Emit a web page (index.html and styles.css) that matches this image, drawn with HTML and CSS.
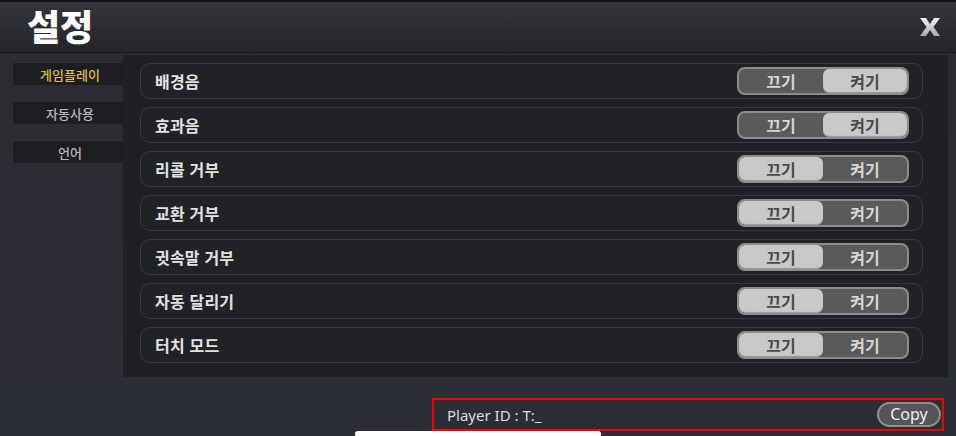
FILE: index.html
```html
<!DOCTYPE html>
<html lang="ko">
<head>
<meta charset="utf-8">
<link rel="stylesheet" href="styles.css">
</head>
<body>
<div class="screen">
  <header class="header">
    <h1 class="title">설정</h1>
    <svg class="close" width="22" height="20" viewBox="0 0 22 20">
      <defs>
        <linearGradient id="xg" x1="0" y1="0" x2="0" y2="1">
          <stop offset="0" stop-color="#f2f2f2"/>
          <stop offset="1" stop-color="#a9a9a9"/>
        </linearGradient>
      </defs>
      <path d="M1 1 L7 1 L11 7 L15 1 L21 1 L14.5 10 L21 19 L15 19 L11 13 L7 19 L1 19 L7.5 10 Z" fill="url(#xg)"/>
    </svg>
  </header>
  <div class="main">
    <nav class="sidebar">
      <div class="tab active">게임플레이</div>
      <div class="tab">자동사용</div>
      <div class="tab">언어</div>
    </nav>
    <section class="panel">
      <div class="row"><span class="label">배경음</span>
        <div class="toggle"><span class="half">끄기</span><span class="half on">켜기</span></div></div>
      <div class="row"><span class="label">효과음</span>
        <div class="toggle"><span class="half">끄기</span><span class="half on">켜기</span></div></div>
      <div class="row"><span class="label">리콜 거부</span>
        <div class="toggle"><span class="half on">끄기</span><span class="half">켜기</span></div></div>
      <div class="row"><span class="label">교환 거부</span>
        <div class="toggle"><span class="half on">끄기</span><span class="half">켜기</span></div></div>
      <div class="row"><span class="label">귓속말 거부</span>
        <div class="toggle"><span class="half on">끄기</span><span class="half">켜기</span></div></div>
      <div class="row"><span class="label">자동 달리기</span>
        <div class="toggle"><span class="half on">끄기</span><span class="half">켜기</span></div></div>
      <div class="row"><span class="label">터치 모드</span>
        <div class="toggle"><span class="half on">끄기</span><span class="half">켜기</span></div></div>
    </section>
  </div>
  <div class="footer">
    <span class="pid">Player ID : T:_</span>
    <span class="copy">Copy</span>
  </div>
  <div class="home"></div>
</div>
</body>
</html>
```
FILE: styles.css
```css
* { box-sizing: border-box; }
html, body { margin: 0; padding: 0; }
body {
  width: 956px;
  height: 436px;
  overflow: hidden;
  background: #2b2d34;
  font-family: "Noto Sans CJK KR", "Noto Sans", sans-serif;
}
.screen {
  position: relative;
  width: 956px;
  height: 436px;
  background: linear-gradient(180deg, #2b2c32 0%, #2c2e36 100%);
}
.header {
  height: 53px;
  border-top: 2px solid #121316;
  border-bottom: 1px solid #17181b;
  background: linear-gradient(180deg, #35363b 0%, #2a2b30 60%, #25262a 100%);
  display: flex;
  align-items: center;
  justify-content: space-between;
  padding: 0 15px 0 27px;
}
.title {
  margin: 0 0 4px 0;
  font-size: 36px;
  font-weight: 900;
  color: #ffffff;
  line-height: 42px;
  padding-right: 2px;
}
.main {
  display: flex;
  margin-top: 2px;
  padding-left: 13px;
}
.sidebar {
  width: 110px;
  display: flex;
  flex-direction: column;
  gap: 16px;
  padding-top: 7px;
}
.tab {
  height: 23px;
  background: #1d1e21;
  border-top: 1px solid #2e2f33;
  color: #b9b9b9;
  font-size: 13px;
  font-weight: 500;
  display: flex;
  align-items: center;
  justify-content: center;
  padding-left: 4px;
}
.tab.active { color: #dcbc42; }
.panel {
  width: 825px;
  height: 322px;
  background: #1f2024;
  padding: 8px 0 0 17px;
  display: flex;
  flex-direction: column;
  gap: 8px;
}
.row {
  width: 783px;
  height: 36px;
  border: 1px solid #393a3f;
  border-radius: 10px;
  background: #212226;
  display: flex;
  align-items: center;
  justify-content: space-between;
  padding: 0 13px 0 14px;
}
.label {
  color: #e2e2e2;
  font-size: 16px;
  font-weight: 700;
  letter-spacing: 0.2px;
}
.toggle {
  width: 172px;
  height: 28px;
  border: 2px solid #8c8c8c;
  border-radius: 8px;
  background: #5a5a5a;
  display: flex;
  overflow: hidden;
}
.half {
  flex: 1;
  display: flex;
  align-items: center;
  justify-content: center;
  font-size: 16px;
  font-weight: 700;
  color: #d6d6d6;
  border-radius: 6px;
}
.half.on {
  background: #c9c9c9;
  color: #4a4a4a;
  box-shadow: inset 0 -1px 1px rgba(0,0,0,0.25);
}
.footer {
  margin: 21px 0 0 432px;
  width: 512px;
  height: 33px;
  border: 2px solid #f40000;
  display: flex;
  align-items: center;
  justify-content: space-between;
  padding: 0 1px 0 13px;
}
.pid {
  font-family: "Noto Sans", "Open Sans", sans-serif;
  font-size: 15px;
  color: #dcdcdc;
  margin-top: 1px;
}
.copy {
  width: 64px;
  height: 25px;
  border: 2px solid #8f8f8f;
  border-radius: 13px;
  background: #555558;
  color: #f0f0f0;
  font-family: "Noto Sans", "Open Sans", sans-serif;
  font-size: 16px;
  display: flex;
  align-items: center;
  justify-content: center;
  padding-bottom: 2px;
}
.home {
  position: absolute;
  left: 355px;
  top: 431px;
  width: 246px;
  height: 6px;
  border-radius: 3px;
  background: #ffffff;
}
```
